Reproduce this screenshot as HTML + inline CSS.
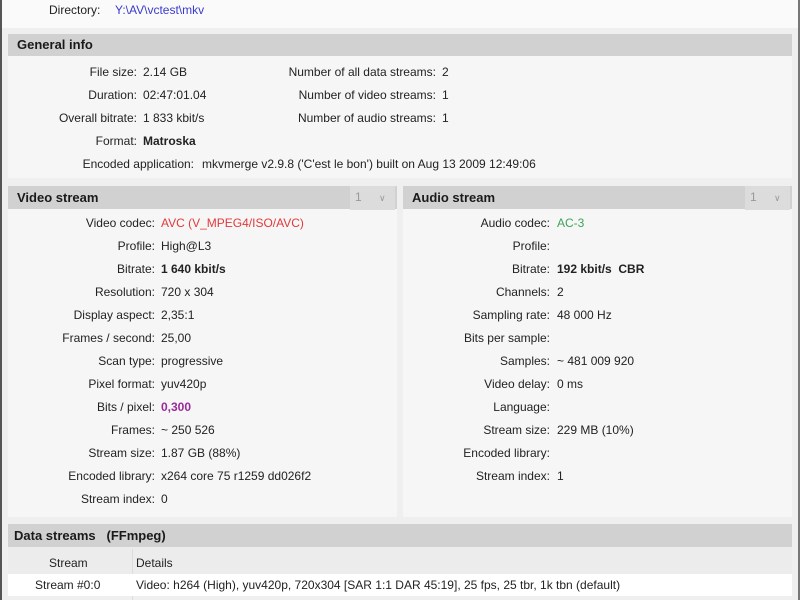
<!DOCTYPE html>
<html><head><meta charset="utf-8"><style>
*{margin:0;padding:0;box-sizing:border-box}
body{width:800px;height:600px;overflow:hidden;background:#efefef;font-family:"Liberation Sans",sans-serif;font-size:12px;color:#222;position:relative}
.a{position:absolute;white-space:nowrap;line-height:16px}
.r{text-align:right}
.top{position:absolute;left:0;top:0;width:800px;height:28px;background:#fafafa}
.lb{position:absolute;left:0;top:0;width:2px;height:600px;background:#555}
.rb{position:absolute;right:0;top:0;width:2px;height:600px;background:#777}
.panel{position:absolute;background:#f6f6f6}
.hd{position:absolute;background:#d1d1d1;font-weight:bold;font-size:13px;padding-left:9px;line-height:23px;color:#1a1a1a}
.dd{position:absolute;background:#dcdcdc;color:#999;font-size:12px;line-height:23px}
b{font-weight:bold}
</style></head><body>
<div class="top"></div>
<div class="lb"></div><div class="rb"></div>
<div class="a" style="left:49px;top:2px">Directory:</div>
<div class="a" style="left:115px;top:2px;color:#3b3bcc">Y:\AV\vctest\mkv</div>

<div class="panel" style="left:8px;top:34px;width:784px;height:144px"></div>
<div class="hd" style="left:8px;top:34px;width:784px;height:22px;line-height:22px">General info</div>
<div class="a r" style="right:663px;top:64px">File size:</div><div class="a" style="left:143px;top:64px">2.14 GB</div>
<div class="a r" style="right:663px;top:87px">Duration:</div><div class="a" style="left:143px;top:87px">02:47:01.04</div>
<div class="a r" style="right:663px;top:110px">Overall bitrate:</div><div class="a" style="left:143px;top:110px">1 833 kbit/s</div>
<div class="a r" style="right:663px;top:133px">Format:</div><div class="a" style="left:143px;top:133px"><b>Matroska</b></div>
<div class="a r" style="right:606px;top:156px">Encoded application:</div><div class="a" style="left:202px;top:156px">mkvmerge v2.9.8 ('C'est le bon') built on Aug 13 2009 12:49:06</div>
<div class="a r" style="right:364px;top:64px">Number of all data streams:</div><div class="a" style="left:442px;top:64px">2</div>
<div class="a r" style="right:364px;top:87px">Number of video streams:</div><div class="a" style="left:442px;top:87px">1</div>
<div class="a r" style="right:364px;top:110px">Number of audio streams:</div><div class="a" style="left:442px;top:110px">1</div>

<div class="panel" style="left:8px;top:186px;width:389px;height:331px"></div>
<div class="hd" style="left:8px;top:186px;width:389px">Video stream</div>
<div class="dd" style="left:350px;top:186px;width:45px;padding-left:5px">1 <span style="margin-left:14px;font-size:9px">&#8744;</span></div>
<div class="panel" style="left:403px;top:186px;width:389px;height:331px"></div>
<div class="hd" style="left:403px;top:186px;width:389px">Audio stream</div>
<div class="dd" style="left:745px;top:186px;width:45px;padding-left:5px">1 <span style="margin-left:14px;font-size:9px">&#8744;</span></div>

<div class="a r" style="right:645px;top:215px">Video codec:</div><div class="a" style="left:161px;top:215px;color:#e03a3a">AVC (V_MPEG4/ISO/AVC)</div>
<div class="a r" style="right:645px;top:238px">Profile:</div><div class="a" style="left:161px;top:238px">High@L3</div>
<div class="a r" style="right:645px;top:261px">Bitrate:</div><div class="a" style="left:161px;top:261px"><b>1 640 kbit/s</b></div>
<div class="a r" style="right:645px;top:284px">Resolution:</div><div class="a" style="left:161px;top:284px">720 x 304</div>
<div class="a r" style="right:645px;top:307px">Display aspect:</div><div class="a" style="left:161px;top:307px">2,35:1</div>
<div class="a r" style="right:645px;top:330px">Frames / second:</div><div class="a" style="left:161px;top:330px">25,00</div>
<div class="a r" style="right:645px;top:353px">Scan type:</div><div class="a" style="left:161px;top:353px">progressive</div>
<div class="a r" style="right:645px;top:376px">Pixel format:</div><div class="a" style="left:161px;top:376px">yuv420p</div>
<div class="a r" style="right:645px;top:399px">Bits / pixel:</div><div class="a" style="left:161px;top:399px;color:#9a2a9a"><b>0,300</b></div>
<div class="a r" style="right:645px;top:422px">Frames:</div><div class="a" style="left:161px;top:422px">~ 250 526</div>
<div class="a r" style="right:645px;top:445px">Stream size:</div><div class="a" style="left:161px;top:445px">1.87 GB (88%)</div>
<div class="a r" style="right:645px;top:468px">Encoded library:</div><div class="a" style="left:161px;top:468px">x264 core 75 r1259 dd026f2</div>
<div class="a r" style="right:645px;top:491px">Stream index:</div><div class="a" style="left:161px;top:491px">0</div>

<div class="a r" style="right:250px;top:215px">Audio codec:</div><div class="a" style="left:557px;top:215px;color:#3aa55a">AC-3</div>
<div class="a r" style="right:250px;top:238px">Profile:</div>
<div class="a r" style="right:250px;top:261px">Bitrate:</div><div class="a" style="left:557px;top:261px"><b>192 kbit/s&nbsp; CBR</b></div>
<div class="a r" style="right:250px;top:284px">Channels:</div><div class="a" style="left:557px;top:284px">2</div>
<div class="a r" style="right:250px;top:307px">Sampling rate:</div><div class="a" style="left:557px;top:307px">48 000 Hz</div>
<div class="a r" style="right:250px;top:330px">Bits per sample:</div>
<div class="a r" style="right:250px;top:353px">Samples:</div><div class="a" style="left:557px;top:353px">~ 481 009 920</div>
<div class="a r" style="right:250px;top:376px">Video delay:</div><div class="a" style="left:557px;top:376px">0 ms</div>
<div class="a r" style="right:250px;top:399px">Language:</div>
<div class="a r" style="right:250px;top:422px">Stream size:</div><div class="a" style="left:557px;top:422px">229 MB (10%)</div>
<div class="a r" style="right:250px;top:445px">Encoded library:</div>
<div class="a r" style="right:250px;top:468px">Stream index:</div><div class="a" style="left:557px;top:468px">1</div>

<div class="hd" style="left:8px;top:524px;width:784px;padding-left:6px">Data streams&nbsp;&nbsp; (FFmpeg)</div>
<div style="position:absolute;left:8px;top:547px;width:784px;height:27px;background:#ececec"></div>
<div style="position:absolute;left:132px;top:549px;width:1px;height:51px;background:#dcdcdc"></div>
<div style="position:absolute;left:8px;top:574px;width:784px;height:22px;background:#fff"></div>
<div class="a" style="left:49px;top:555px">Stream</div>
<div class="a" style="left:136px;top:555px">Details</div>
<div class="a" style="left:35px;top:577px">Stream #0:0</div>
<div class="a" style="left:136px;top:577px">Video: h264 (High), yuv420p, 720x304 [SAR 1:1 DAR 45:19], 25 fps, 25 tbr, 1k tbn (default)</div>
</body></html>
